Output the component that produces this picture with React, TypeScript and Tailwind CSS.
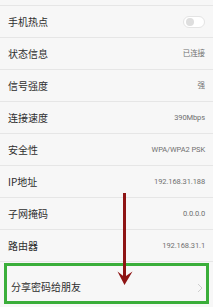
// 手机热点 settings screen with share-password row highlighted
const rows = [
  { label: "状态信息", value: "已连接" },
  { label: "信号强度", value: "强" },
  { label: "连接速度", value: "390Mbps" },
  { label: "安全性", value: "WPA/WPA2 PSK" },
  { label: "IP地址", value: "192.168.31.188" },
  { label: "子网掩码", value: "0.0.0.0" },
  { label: "路由器", value: "192.168.31.1" },
];

const cjk = { fontFamily: '"Noto Sans CJK SC", "Noto Sans", sans-serif' };
const num = { fontFamily: 'Roboto, "Noto Sans CJK SC", sans-serif' };

export default function App() {
  return (
    <div className="relative w-[213px] h-[307px] overflow-hidden bg-[#f7f7f7]">
      <div className="h-[6px] border-b border-[#e6e6e6]" />
      <div className="flex items-center justify-between h-[32px] px-2 border-b border-[#e6e6e6]">
        <span className="text-[10px] text-[#2e2e2e]" style={cjk}>
          手机热点
        </span>
        <div className="flex items-center w-[22px] h-[12px] rounded-full border border-[#e4e4e4] bg-white px-[1.5px]">
          <div className="w-[8px] h-[8px] rounded-full bg-[#dedede]" />
        </div>
      </div>
      {rows.map((r) => (
        <div
          key={r.label}
          className="flex items-center justify-between h-[32px] px-2 border-b border-[#e6e6e6]"
        >
          <span className="text-[10px] text-[#2e2e2e]" style={cjk}>
            {r.label}
          </span>
          <span className="text-[7.5px] text-[#707070] tracking-[-0.1px]" style={num}>
            {r.value}
          </span>
        </div>
      ))}
      <div className="mx-[4px] mt-[1px] h-[41px] border-[3px] border-[#3aae3a] flex items-end justify-between pl-[4px] pr-[3px] pb-[7px]">
        <span className="text-[10px] text-[#2e2e2e]" style={cjk}>
          分享密码给朋友
        </span>
        <svg width="6" height="10" viewBox="0 0 6 10" className="mb-[1px]">
          <path d="M1 1 L5 5 L1 9" fill="none" stroke="#cfcfcf" strokeWidth="1" />
        </svg>
      </div>
      <svg className="absolute left-0 top-0" width="213" height="307">
        <line x1="124.5" y1="193" x2="124.5" y2="280" stroke="#8e1414" strokeWidth="3" />
        <path d="M117.5 271.5 L124.5 285 L132.5 271.5 L124.5 277 Z" fill="#8e1414" />
      </svg>
    </div>
  );
}
